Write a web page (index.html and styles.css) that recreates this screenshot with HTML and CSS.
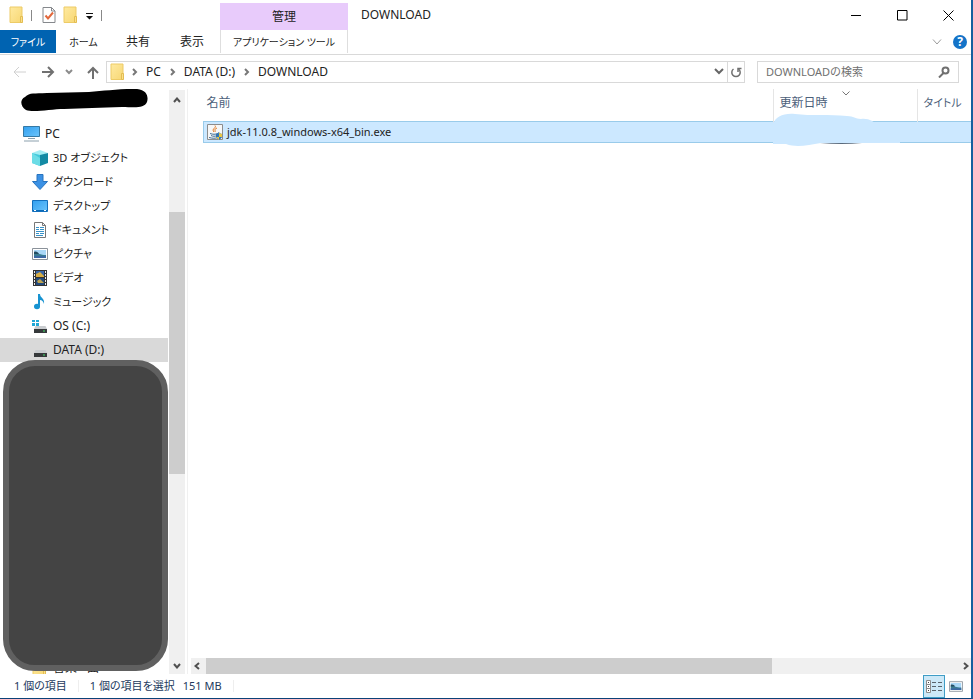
FILE: index.html
```html
<!DOCTYPE html>
<html lang="ja">
<head>
<meta charset="utf-8">
<title>DOWNLOAD</title>
<link rel="stylesheet" href="styles.css">
</head>
<body>
<svg class="defs" aria-hidden="true">
  <defs>
    <linearGradient id="blue" x1="0" y1="0" x2="1" y2="1"><stop offset="0" stop-color="#32a0f0"/><stop offset="1" stop-color="#6cc4fb"/></linearGradient>
    <linearGradient id="gold" x1="0" y1="0" x2="1" y2="1"><stop offset="0" stop-color="#ffeaa0"/><stop offset="1" stop-color="#f7d774"/></linearGradient>
    <symbol id="folder" viewBox="0 0 16 18"><path d="M1 1h12v15.500H1z" fill="url(#gold)" stroke="#edcb66"/><path d="M11.500 10.500h2v6h-2z" fill="#fbe08a" stroke="#e3bd52"/></symbol>
    <symbol id="picture" viewBox="0 0 16 12"><path d="M.5.5h15v11H.5z" fill="#fff" stroke="#8b929a"/><path d="M2 2h12v8H2z" fill="#a9d7f7"/><path d="M2 5c4 0 6 2 12 2v3H2z" fill="#397b91"/><path d="M2 8h12v2H2z" fill="#3c68a4"/><path d="M2 4c2-1 4 0 5 2H2z" fill="#244c60"/></symbol>
    <symbol id="drive" viewBox="0 0 16 16"><path d="M3.500 8h10L15 11H2z" fill="#c9cccf"/><path d="M2 11h13v4H2z" fill="#36393b"/><path d="M11 12.500h2v1h-2z" fill="#41e06a"/></symbol>
  </defs>
</svg>
<div class="window">
  <header class="ribbon">
    <div class="left">
      <div class="quick">
        <svg width="16" height="18"><use href="#folder"/></svg>
        <i class="bar"></i>
        <button aria-label="プロパティ"><svg width="14" height="16" viewBox="0 0 14 16"><path d="M1 .5h8.500l3.500 3.500v11.500H1z" fill="#fff" stroke="#85888c"/><path d="M9.500.5V4H13" fill="none" stroke="#85888c"/><path d="M3.500 8.500l2.500 3 5-6" fill="none" stroke="#e2683c" stroke-width="2"/></svg></button>
        <button aria-label="新しいフォルダー"><svg width="16" height="18"><use href="#folder"/></svg></button>
        <button class="more" aria-label="カスタマイズ"><svg width="7" height="7"><path d="M0 0h7v1H0zM0 3h7L3.500 6.500z" fill="#111"/></svg></button>
        <i class="bar"></i>
      </div>
      <nav class="tabs kana"><button class="file">ファイル</button><button class="home">ホーム</button><button>共有</button><button>表示</button></nav>
    </div>
    <div class="context kana"><div class="manage">管理</div><button>アプリケーション ツール</button></div>
    <div class="caption">DOWNLOAD</div>
    <div class="right">
      <div class="winbtns">
        <button aria-label="最小化"><svg width="11" height="11"><path d="M0 5.500h10" stroke="#000"/></svg></button>
        <button aria-label="最大化"><svg width="11" height="11"><path d="M.5.5h9.500v9.500H.5z" fill="none" stroke="#000"/></svg></button>
        <button aria-label="閉じる"><svg width="11" height="11"><path d="M.5.5l10 10M10.500.5l-10 10" stroke="#000"/></svg></button>
      </div>
      <div class="helpbar">
        <button aria-label="リボンの展開"><svg width="10" height="6" fill="none" stroke="#9b9b9b"><path d="M1 .5l4 4.500 4-4.500"/></svg></button>
        <button class="help" aria-label="ヘルプ">?</button>
      </div>
    </div>
  </header>
  <div class="location">
    <div class="arrows">
      <button aria-label="戻る"><svg width="14" height="12" fill="none" stroke="#d0d0d0" stroke-width="1"><path d="M13 6H1M6 1L1 6l5 5"/></svg></button>
      <button aria-label="進む"><svg width="14" height="12" fill="none" stroke="#707070" stroke-width="2"><path d="M1 6h11M7 1l5 5-5 5"/></svg></button>
      <button aria-label="履歴"><svg width="8" height="6" fill="none" stroke="#8c8c8c" stroke-width="2"><path d="M1 1l3 3 3-3"/></svg></button>
      <button aria-label="上へ"><svg width="12" height="13" fill="none" stroke="#707070" stroke-width="2"><path d="M6 13V2M1 7l5-5 5 5"/></svg></button>
    </div>
    <div class="address">
      <svg width="16" height="18"><use href="#folder"/></svg>
      <svg class="chev" width="6" height="8"><path d="M1 1l3 3-3 3"/></svg>
      <button>PC</button>
      <svg class="chev" width="6" height="8"><path d="M1 1l3 3-3 3"/></svg>
      <button>DATA (D:)</button>
      <svg class="chev" width="6" height="8"><path d="M1 1l3 3-3 3"/></svg>
      <button>DOWNLOAD</button>
      <button class="drop" aria-label="以前の場所"><svg width="10" height="8" fill="none" stroke="#666" stroke-width="2"><path d="M1 1l4 4 4-4"/></svg></button>
      <button class="reload" aria-label="更新"><svg width="12" height="12" fill="none" stroke="#707070" stroke-width="1.500"><path d="M3.500 3a4.200 4.200 0 1 0 5 0"/><path d="M8 6V2.500h3.500"/></svg></button>
    </div>
    <label class="search"><input type="text" aria-label="DOWNLOADの検索" placeholder="DOWNLOADの検索"><svg width="12" height="12" fill="none" stroke="#707070" stroke-width="2"><circle cx="7.500" cy="4.500" r="3"/><path d="M5.500 7L1 11.500"/></svg></label>
  </div>
  <div class="main">
    <aside class="side">
      <svg class="scribble" width="128" height="24" viewBox="0 0 128 24"><path d="M4 8C9 3 13 5 26 4l42-1C82 2 95 0 112 0c13-1 16 7 14 13-3 7-13 5-25 5-21 1-39 1-58 2-13 0-31 4-38 1C0 18-2 11 4 8z"/></svg>
      <nav class="tree kana">
        <a class="root" href="#"><svg width="17" height="16" viewBox="0 0 17 16"><path d="M.5.5h16v10H.5z" fill="url(#blue)" stroke="#3579a5"/><path d="M5 12.500h7M1 15h15" stroke="#8ba0ad"/></svg>PC</a>
        <a href="#"><svg width="16" height="16"><path d="M0 3l8-3 8 3-8 3z" fill="#a4edf3"/><path d="M0 3l8 2v11l-8-3z" fill="#42c9db"/><path d="M16 3L8 5v11l8-3z" fill="#138aa4"/><path d="M0 3l8 5v8l-8-3z" fill="#6bdce6"/></svg><span class="small">3D オブジェクト</span></a>
        <a href="#"><svg width="16" height="16"><path d="M5 .5h6v7h4.500L8 15.500.5 7.500H5z" fill="#3b91e4" stroke="#2874bf"/></svg><span class="small">ダウンロード</span></a>
        <a href="#"><svg width="16" height="16"><path d="M.5 2.500h15v11H.5z" fill="url(#blue)" stroke="#1470bd"/><path d="M1 12.500h14" stroke="#0869b8"/><path d="M2 12.500h2m8 0h2" stroke="#fff"/></svg><span class="small">デスクトップ</span></a>
        <a href="#"><svg width="16" height="16"><path d="M2.500.5h8l3 3v12h-11z" fill="#fff" stroke="#777"/><path d="M10.500.5v3h3" fill="none" stroke="#777"/><path d="M4 5.500h3M4 7.500h3M8 5.500h4M8 7.500h4M4 9.500h8M4 11.500h3M8 11.500h4M4 13.500h7" stroke="#3792c8"/></svg><span class="small">ドキュメント</span></a>
        <a href="#"><svg width="16" height="12"><use href="#picture"/></svg><span class="small">ピクチャ</span></a>
        <a href="#"><svg width="16" height="16"><path d="M1 0h14v16H1z" fill="#333"/><path d="M2.500 1v15M13.500 1v15" stroke="#eee" stroke-dasharray="2 1"/><path d="M4 1h8v6H4z" fill="#3866a8"/><path d="M4 4l4-2 4 4v1H4z" fill="#d8ad42"/><path d="M4 8h8v7H4z" fill="#234a7c"/><path d="M5 11l3-2 4 4H6z" fill="#bda350"/></svg><span class="small">ビデオ</span></a>
        <a href="#"><svg width="16" height="16"><ellipse cx="5" cy="12.500" rx="3" ry="2.800" fill="#1793d1"/><path d="M6 0h2c0 4 5 4 4 10-1-3-2-4-4-4v7H6z" fill="#1793d1"/></svg><span class="small">ミュージック</span></a>
        <a href="#"><svg width="16" height="16"><use href="#drive"/><path d="M0 2h3v2H0zM4 2h3v2H4zM0 5h3v3H0zM4 5h3v3H4z" fill="#20a7d6"/></svg>OS (C:)</a>
        <a class="current" href="#"><svg width="16" height="16"><use href="#drive"/></svg>DATA (D:)</a>
      </nav>
      <a class="cut kana" href="#"><svg width="16" height="18"><use href="#folder"/></svg>音楽 - 曲</a>
      <div class="cover"></div>
    </aside>
    <div class="vscroll"><svg width="8" height="6"><path d="M1 5l3-3.500L7 5"/></svg><div class="track"><i></i></div><svg width="8" height="6"><path d="M1 1l3 3.500L7 1"/></svg></div>
    <section class="content">
      <table>
        <colgroup><col><col class="c-date"><col class="c-title"></colgroup>
        <thead class="kana"><tr><th>名前</th><th>更新日時<svg class="sort" width="8" height="5"><path d="M.5.5L4 4 7.500.5"/></svg></th><th><span class="small">タイトル</span></th></tr></thead>
        <tbody><tr><td><div class="name"><svg width="16" height="16"><path d="M.5.5h15v15H.5z" fill="#f7f7f7" stroke="#8c8c8c"/><path d="M8 1.500C10 4 4 4.500 7 8M10 4C6 6 9 6 8 8" fill="none" stroke="#e37920"/><path d="M3 9.500c3 1 5 1 8 0M4 11.500c2 1 4 1 6 0M2 13.500c4 1 6 1 9 0M11 9c2-1 2 1 0 2" fill="none" stroke="#416d94"/><path d="M9 10l3-1 3 1v3c0 1-2 2-3 3-1-1-3-2-3-3z" fill="#2f74b8"/><path d="M12 9l3 1v3h-3zM9 13h3v3z" fill="#e9c743"/></svg><span class="small">jdk-11.0.8_windows-x64_bin.exe</span></div></td><td><svg class="smudge" width="132" height="34"><path d="M3 12C5 3 14 0 25 1c16 2 34 0 52 2 7 0 8 3 14 3 8-1 13 3 16 6l23 3v15H51c-13 2-24 5-35 1H3z" fill="#cce8ff"/><path d="M50 30q22 2 42 0z" fill="#59697b"/></svg></td><td></td></tr></tbody>
      </table>
      <div class="hscroll"><svg width="6" height="8"><path d="M5 1L1.500 4 5 7"/></svg><i></i><svg width="6" height="8"><path d="M1 1l3.500 3L1 7"/></svg></div>
    </section>
  </div>
  <footer class="status kana">
    <span>1 個の項目</span><i></i><span>1 個の項目を選択</span><span class="size">151 MB</span><i></i>
    <div class="views">
      <button class="on" aria-label="詳細"><svg width="17" height="13"><path d="M.5.5h4v12h-4zM.5 4.500h4M.5 8.500h4" fill="#fff" stroke="#8c8c8c"/><path d="M2 2.500h1M2 6.500h1M2 10.500h1" stroke="#444"/><path d="M6 2.500h4m2 0h4M6 6.500h4m2 0h4M6 10.500h4m2 0h4" stroke="#59636b"/></svg></button>
      <button aria-label="大アイコン"><svg width="14" height="11"><use href="#picture"/></svg></button>
    </div>
  </footer>
</div>
</body>
</html>
```
FILE: styles.css
```css
* { box-sizing: border-box; }
body { margin: 0; background: #fff; color: #222; font: 12px/16px "Noto Sans", "Noto Sans CJK JP", sans-serif; }
button { font: inherit; color: inherit; background: none; border: 0; padding: 0; display: flex; align-items: center; justify-content: center; }
a { color: inherit; text-decoration: none; }
svg { display: block; flex: none; }
.defs { position: absolute; width: 0; height: 0; }
.kana { font-feature-settings: "palt"; }
.small { font-size: 11px; }
.window { height: 100vh; display: flex; flex-direction: column; border-right: 2px solid #17609f; border-bottom: 1px solid #0b4278; overflow: hidden; }

.ribbon { display: flex; height: 55px; border-bottom: 1px solid #d9d9d9; }
.left { width: 220px; }
.quick { display: flex; align-items: center; height: 30px; padding-left: 9px; }
.quick .bar { width: 1px; height: 11px; background: #888; margin: 0 10px 0 6px; }
.quick button { margin-right: 7px; }
.quick .more { margin-right: 2px; padding-top: 3px; }
.tabs { display: flex; height: 23px; }
.tabs button { width: 54px; }
.tabs .file { width: 56px; background: #0063b1; color: #fff; font-size: 10px; }
.tabs .home { width: 55px; font-size: 10px; }
.context { width: 128px; display: flex; flex-direction: column; padding-top: 3px; }
.manage { height: 27px; line-height: 27px; text-align: center; background: #e8cbfb; }
.context button { flex: 0 0 23px; border: 1px solid #dedede; border-width: 0 1px; white-space: nowrap; font-size: 10px; }
.caption { flex: 1; padding: 7px 13px; }
.right { display: flex; flex-direction: column; }
.winbtns { display: flex; height: 30px; }
.winbtns button { width: 46px; }
.helpbar { display: flex; justify-content: flex-end; align-items: center; gap: 11px; height: 24px; padding-right: 4px; }
.help { width: 14px; height: 14px; border-radius: 50%; background: #1473c8; color: #fff; font-weight: bold; }

.location { display: flex; align-items: center; height: 34px; padding-right: 12px; }
.arrows { display: flex; align-items: center; justify-content: space-between; width: 106px; padding: 0 7px 0 13px; }
.arrows button:nth-child(2) { margin: 0 -4px 0 0; }
.address { flex: 1; display: flex; align-items: center; height: 22px; border: 1px solid #d9d9d9; padding-left: 3px; }
.address .chev { margin: 0 8px 0 9px; fill: none; stroke: #777; stroke-width: 2; }
.address .chev:nth-child(2) { margin-left: 6px; }
.address .drop { margin-left: auto; width: 16px; }
.address .reload { width: 17px; height: 20px; border-left: 1px solid #d9d9d9; }
.search { display: flex; align-items: center; width: 202px; height: 22px; margin-left: 12px; border: 1px solid #d9d9d9; padding: 0 8px; }
.search input { flex: 1; min-width: 0; border: 0; padding: 0; font: inherit; outline: 0; }
.search input::placeholder { color: #707070; font-size: 11px; }

.main { flex: 1; min-height: 0; display: flex; }
.side { position: relative; width: 169px; display: flex; flex-direction: column; overflow: hidden; padding-top: 33px; }
.scribble { position: absolute; left: 21px; top: 0; }
.tree { display: flex; flex-direction: column; margin-right: 1px; }
.tree a, .cut { display: flex; align-items: center; gap: 5px; height: 24px; padding-left: 32px; }
.tree .root { padding-left: 23px; }
.tree .current { background: #d9d9d9; }
.cut { margin: auto 0 -6px; flex: none; }
.cover { position: absolute; left: 3px; right: 1px; top: 271px; bottom: 3px; background: #444; border: 6px solid #606060; border-radius: 32px; }
.vscroll { width: 16px; display: flex; flex-direction: column; align-items: center; gap: 6px; margin-top: 1px; padding: 7px 0 5px; background: #f0f0f0; }
.track { flex: 1; width: 100%; display: flex; flex-direction: column; }
.track::before { content: ""; flex: 104; }
.track i { flex: 264; background: #cdcdcd; }
.track::after { content: ""; flex: 184; }
.vscroll svg, .hscroll svg { fill: none; stroke: #505050; stroke-width: 2; }
.content { flex: 1; min-width: 0; display: flex; flex-direction: column; justify-content: space-between; margin-left: 2px; padding-left: 3px; border-left: 1px solid #f0f0f0; }
table { margin-left: 12px; border-collapse: collapse; table-layout: fixed; }
.c-date { width: 144px; }
.c-title { width: 54px; }
th { position: relative; height: 32px; padding: 0 0 4px 6px; text-align: left; font-weight: normal; color: #4c607a; border-left: 1px solid #e5e5e5; white-space: nowrap; }
th:first-child { padding-left: 3px; border-left: 0; }
.sort { position: absolute; left: 68px; top: 2px; fill: none; stroke: #777; }
td { position: relative; height: 21px; padding: 0; background: #cce8ff; border: 1px solid #99cbea; border-width: 1px 0; }
td:first-child { border-left-width: 1px; }
.name { display: flex; align-items: center; gap: 4px; padding-left: 3px; }
.smudge { position: absolute; left: -3px; top: -9px; z-index: 1; }
.hscroll { display: flex; align-items: center; height: 16px; background: #f0f0f0; padding: 0 2px 0 3px; }
.hscroll i { width: 73%; height: 16px; margin: 0 auto 0 6px; background: #cdcdcd; }

.status { display: flex; align-items: center; height: 24px; padding-left: 14px; color: #23395d; font-size: 11px; }
.status i { width: 1px; height: 12px; background: #eee; margin: 0 11px; }
.size { margin-left: 8px; }
.views { display: flex; margin-left: auto; padding-right: 4px; }
.views button { width: 22px; height: 23px; }
.views .on { background: #cce8f7; border: 1px solid #3f9dc6; }
```
